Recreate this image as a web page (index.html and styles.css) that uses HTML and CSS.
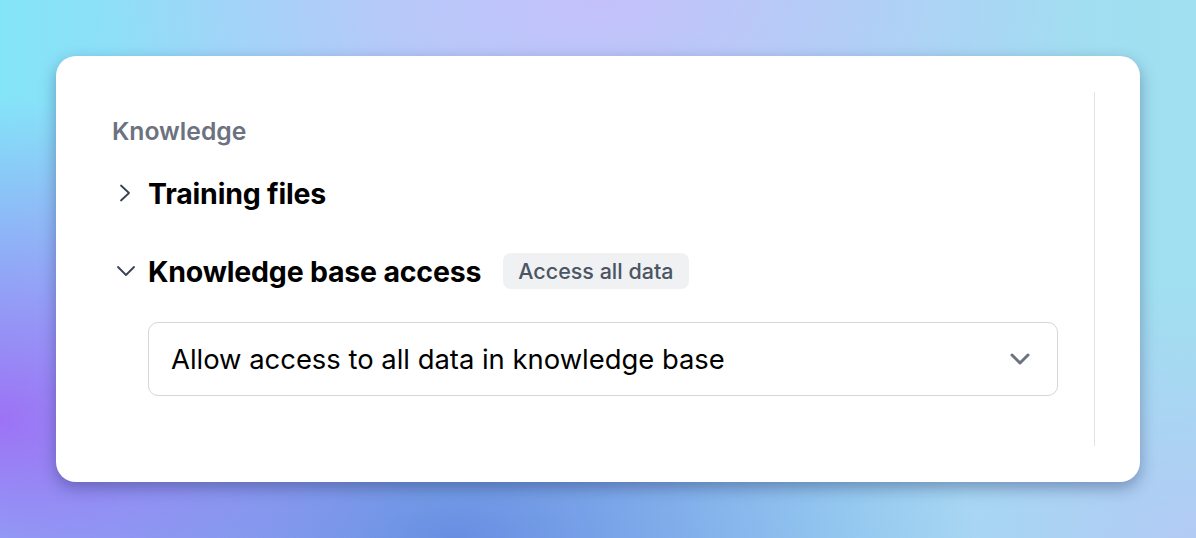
FILE: index.html
```html
<!DOCTYPE html>
<html>
<head>
<meta charset="utf-8">
<link rel="stylesheet" href="styles.css">
</head>
<body>
<div class="card">
  <div class="content">
    <div class="label">Knowledge</div>
    <div class="row row-files">
      <svg class="chev-right" width="14" height="20" viewBox="0 0 14 20"><path d="M3 2.5 L11 10 L3 17.5" fill="none" stroke="#374151" stroke-width="1.8" stroke-linecap="round" stroke-linejoin="round"/></svg>
      <span class="title">Training files</span>
    </div>
    <div class="row row-kb">
      <svg class="chev-down" width="20" height="14" viewBox="0 0 20 14"><path d="M2 3 L10 11 L18 3" fill="none" stroke="#374151" stroke-width="1.8" stroke-linecap="round" stroke-linejoin="round"/></svg>
      <span class="title">Knowledge base access</span>
      <span class="badge">Access all data</span>
    </div>
    <div class="select">
      <span class="select-text">Allow access to all data in knowledge base</span>
      <svg class="select-chev" width="22" height="14" viewBox="0 0 22 14"><path d="M3 3 L11 11 L19 3" fill="none" stroke="#6b7280" stroke-width="3" stroke-linecap="round" stroke-linejoin="round"/></svg>
    </div>
  </div>
</div>
</body>
</html>
```
FILE: styles.css
```css
* { box-sizing: border-box; }
html, body { margin: 0; }
body {
  width: 1196px;
  height: 538px;
  padding: 56px;
  overflow: hidden;
  font-family: Inter, "Noto Sans", sans-serif;
  background:
    radial-gradient(ellipse 440px 320px at 0% 78%, rgba(158,108,245,0.95), rgba(158,108,245,0) 100%),
    radial-gradient(ellipse 500px 260px at 50% 0%, rgba(200,190,250,0.9), rgba(200,190,250,0) 100%),
    radial-gradient(ellipse 520px 260px at 38% 100%, rgba(100,138,225,0.95), rgba(100,138,225,0) 100%),
    radial-gradient(ellipse 360px 260px at 100% 100%, rgba(180,200,245,0.9), rgba(180,200,245,0) 100%),
    linear-gradient(90deg, #84e4f8 0%, #a4d4f8 35%, #a0e0f0 100%);
}
.card {
  width: 1084px;
  height: 426px;
  background: #fff;
  border-radius: 20px;
  box-shadow: 0 6px 16px rgba(30,40,90,0.38);
  padding: 36px 45px 36px 56px;
}
.content {
  height: 100%;
  border-right: 1px solid #e3e3e6;
  padding-top: 24px;
}
.label {
  font-size: 24.7px;
  font-weight: 600;
  color: #6b7280;
  line-height: 30px;
}
.row {
  display: flex;
  align-items: center;
}
.row-files { margin-top: 32px; height: 30px; }
.row-kb { margin-top: 45px; height: 36px; }
.chev-right { margin-left: 6px; margin-right: 16px; }
.chev-down { margin-left: 4px; margin-right: 12px; }
.title {
  font-size: 28.5px;
  font-weight: 700;
  color: #000;
  letter-spacing: -0.2px;
}
.badge {
  margin-left: 22px;
  background: #f0f1f3;
  border-radius: 8px;
  height: 36px;
  padding: 0 15px;
  display: flex;
  align-items: center;
  font-size: 21.5px;
  font-weight: 500;
  color: #4b5563;
}
.select {
  margin-top: 33px;
  margin-left: 36px;
  width: 910px;
  height: 74px;
  border: 1px solid #d4d6dc;
  border-radius: 10px;
  display: flex;
  align-items: center;
  justify-content: space-between;
  padding: 0 26px 0 22px;
}
.select-text {
  font-size: 27.4px;
  color: #000;
}
```
